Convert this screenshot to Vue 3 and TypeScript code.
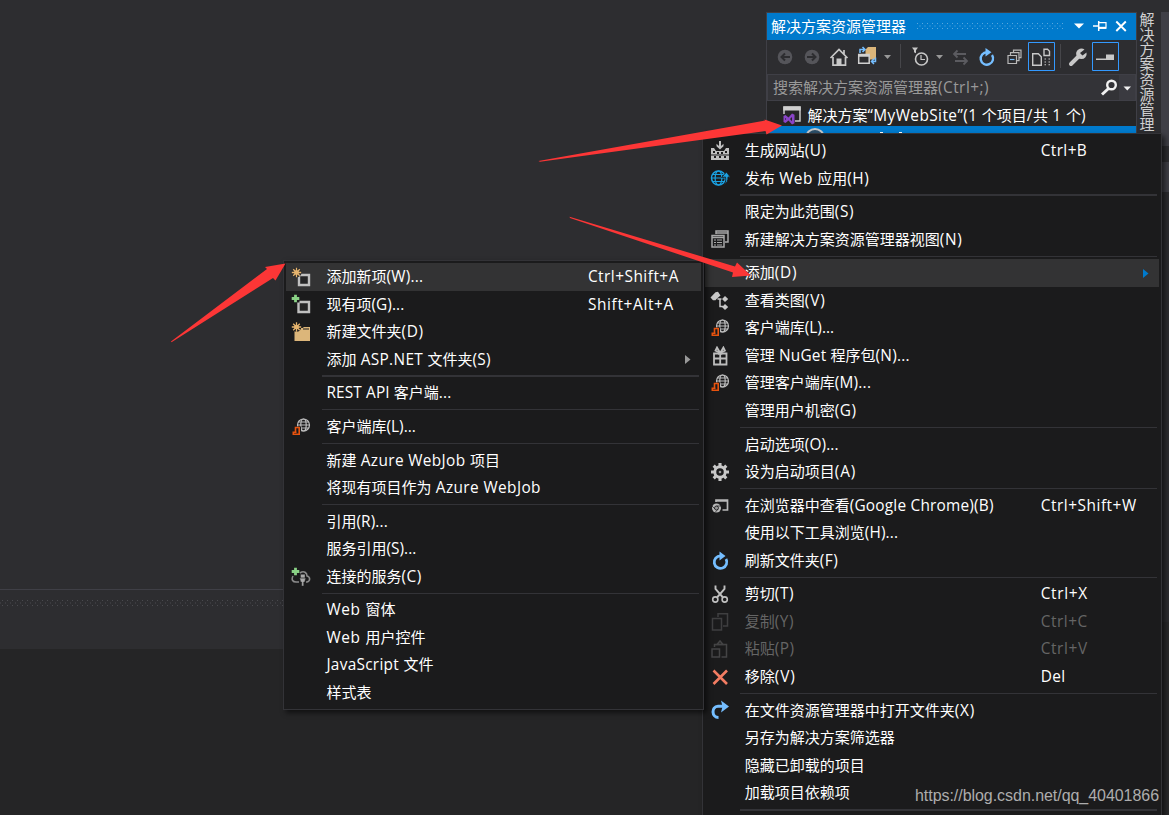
<script setup lang="ts">
import { ref, type Directive } from 'vue'

interface MenuEntry {
  label?: string
  width?: number
  icon?: string
  keys?: string
  keysWidth?: number
  disabled?: boolean
  active?: boolean
  submenu?: boolean
  separator?: boolean
  thick?: boolean
}

const sep: MenuEntry = { separator: true }
const thickSep: MenuEntry = { separator: true, thick: true }

const contextMenu = ref<MenuEntry[]>([
  { label: '生成网站(U)', width: 82, icon: 'build', keys: 'Ctrl+B', keysWidth: 46.5 },
  { label: '发布 Web 应用(H)', width: 124.5, icon: 'publish' },
  thickSep,
  { label: '限定为此范围(S)', width: 109.5 },
  { label: '新建解决方案资源管理器视图(N)', width: 218, icon: 'views' },
  sep,
  { label: '添加(D)', width: 52.5, active: true, submenu: true },
  { label: '查看类图(V)', width: 81, icon: 'diagram' },
  { label: '客户端库(L)...', width: 89.5, icon: 'library' },
  { label: '管理 NuGet 程序包(N)...', width: 165, icon: 'gift' },
  { label: '管理客户端库(M)...', width: 126.5, icon: 'library' },
  { label: '管理用户机密(G)', width: 112 },
  sep,
  { label: '启动选项(O)...', width: 94 },
  { label: '设为启动项目(A)', width: 111.5, icon: 'gear' },
  sep,
  { label: '在浏览器中查看(Google Chrome)(B)', width: 249, icon: 'browser', keys: 'Ctrl+Shift+W', keysWidth: 96 },
  { label: '使用以下工具浏览(H)...', width: 153.5 },
  { label: '刷新文件夹(F)', width: 93.5, icon: 'refresh' },
  sep,
  { label: '剪切(T)', width: 49.5, icon: 'cut', keys: 'Ctrl+X', keysWidth: 47 },
  { label: '复制(Y)', width: 49.5, icon: 'copy', keys: 'Ctrl+C', keysWidth: 47, disabled: true },
  { label: '粘贴(P)', width: 50, icon: 'paste', keys: 'Ctrl+V', keysWidth: 47, disabled: true },
  { label: '移除(V)', width: 51, icon: 'remove', keys: 'Del', keysWidth: 25 },
  sep,
  { label: '在文件资源管理器中打开文件夹(X)', width: 230.5, icon: 'open' },
  { label: '另存为解决方案筛选器' },
  { label: '隐藏已卸载的项目' },
  { label: '加载项目依赖项' },
  thickSep,
])

const addMenu = ref<MenuEntry[]>([
  { label: '添加新项(W)...', width: 97, icon: 'newitem', keys: 'Ctrl+Shift+A', keysWidth: 91, active: true },
  { label: '现有项(G)...', width: 78, icon: 'existing', keys: 'Shift+Alt+A', keysWidth: 86 },
  { label: '新建文件夹(D)', width: 97.5, icon: 'newfolder' },
  { label: '添加 ASP.NET 文件夹(S)', width: 164.5, submenu: true },
  thickSep,
  { label: 'REST API 客户端...', width: 125 },
  sep,
  { label: '客户端库(L)...', width: 89.5, icon: 'library' },
  sep,
  { label: '新建 Azure WebJob 项目', width: 173.5 },
  { label: '将现有项目作为 Azure WebJob', width: 214.5 },
  sep,
  { label: '引用(R)...', width: 61.5 },
  { label: '服务引用(S)...', width: 90 },
  { label: '连接的服务(C)', width: 95.5, icon: 'service' },
  sep,
  { label: 'Web 窗体', width: 69 },
  { label: 'Web 用户控件', width: 99 },
  { label: 'JavaScript 文件', width: 107 },
  { label: '样式表' },
])

const menus = [
  { name: 'context', items: contextMenu },
  { name: 'add', items: addMenu },
]

/** Splits a label into Latin and CJK runs. */
function runs(text: string): { text: string; latin: boolean }[] {
  return (text.match(/[\u4e00-\u9fff]+|[^\u4e00-\u9fff]+/g) ?? []).map((t) => ({
    text: t,
    latin: !/[\u4e00-\u9fff]/.test(t),
  }))
}

/** Distributes spacing over the Latin runs so that the label has the given width. */
const vFit: Directive<HTMLElement, number | undefined> = {
  mounted(el, { value }) {
    if (!value) return
    const latin = Array.from(el.querySelectorAll<HTMLElement>('.latin'))
    const count = latin.reduce((n, s) => n + (s.textContent ?? '').length, 0)
    if (!count) return
    const gap = (value - el.getBoundingClientRect().width) / count
    latin.forEach((s) => (s.style.letterSpacing = gap.toFixed(3) + 'px'))
  },
}

const icons: Record<string, string> = {
  build: `<g fill="#c0c0c0"><path d="M9 0h2v5l2.500-2.300v2.600L10 8.500 6.500 5.300V2.700L9 5z"/><path d="M1 7h3l2 3h8l2-3h3v6.500H1z"/><path d="M1 14.500h18V19H1z"/></g><g fill="#1b1b1c"><path d="M3 10h2v2H3zM7 11h2v2H7zM11 11h2v2h-2zM15 10h2v2h-2zM4 15h2v2H4zM9 15h2v2H9zM14 15h2v2h-2z"/></g>`,
  publish: `<g fill="none" stroke="#1ba1e2" stroke-width="1.200"><circle cx="8.500" cy="10" r="7" stroke-width="1.500"/><ellipse cx="8.500" cy="10" rx="3.400" ry="7"/><path d="M1.500 10h14M2.500 6.500h12M2.500 13.500h12"/></g><path d="M11.500 9.500l5-5.500L20.500 9.500l-2.500-.6c0 4-1 6-4 7.600 2-2.500 2-4.500 1.500-7.500z" fill="#1ba1e2" stroke="#1b1b1c" stroke-width=".8"/>`,
  views: `<g fill="none" stroke="#a8a8a8" stroke-width="1.500"><path d="M6 5V2h12v11h-3M6 4h12"/><path d="M2 6.500h12v11.500H2zM2 8.500h12"/><path d="M4 11h2M7 11h5M4 13.500h2M7 13.500h5M4 16h2M7 16h5" stroke-width="1.100"/></g>`,
  diagram: `<g fill="#c8c8c8"><path d="M.5 6.500L5.500 1.300 8 .8 10.500 4.500 6.500 8 5.500 9.200 3 9.200z"/><path d="M15 5l3.200 3-3.200 3-3-3zM15 13l3.200 3-3.200 3-3-3z"/></g><path d="M7.500 8h4M10 8v7.500h3" fill="none" stroke="#c8c8c8" stroke-width="1.500"/>`,
  library: `<g fill="none" stroke="#bdbdbd" stroke-width="1.200"><circle cx="12.500" cy="8" r="6"/><ellipse cx="12.500" cy="8" rx="2.700" ry="6"/><path d="M6.500 8h12M7.500 5h10M7.500 11h10"/></g><path d="M3.500 9.500H10V19H1v-5h2.500z" fill="#1b1b1c"/><path d="M4.500 14.500v-4h3.700v6.700H2.300v-2h3.200" fill="none" stroke="#e8530e" stroke-width="1.600"/>`,
  gift: `<g fill="none" stroke="#bdbdbd" stroke-width="1.800"><path d="M4 7.500h12.500v11H4zM4 12.500h12.500M10.200 7v11"/><path d="M10.200 7L5.500 4.500l1.500-3zM10.200 7l4.700-2.500-1.500-3z"/></g>`,
  gear: `<g fill="none" stroke="#c8c8c8"><circle cx="10" cy="10" r="5.200" stroke-width="2.900"/><path d="M10 1v3M10 16v3M1 10h3M16 10h3M3.700 3.700l2.100 2.100M14.200 14.200l2.100 2.100M16.300 3.700l-2.100 2.100M5.800 14.200l-2.100 2.100" stroke-width="3.100"/></g><circle cx="10" cy="10" r="1.300" fill="#999"/>`,
  browser: `<path d="M6 6V4h11.500v10h-5M5.500 5h12" fill="none" stroke="#b8b8b8" stroke-width="1.700"/><circle cx="6.500" cy="12" r="4.500" fill="#b8b8b8"/><circle cx="6.500" cy="12" r="2" fill="#999" stroke="#1b1b1c" stroke-width=".8"/><path d="M6.500 10H11M5 13l-3-3M8 13l-2.500 3" stroke="#1b1b1c" stroke-width=".7"/>`,
  refresh: `<path d="M10.500 4.800A6.300 6.300 0 1 0 16 8" fill="none" stroke="#75beff" stroke-width="2.800"/><path d="M9.500 .5l6 4.500-6 4.500z" fill="#75beff"/>`,
  cut: `<g fill="none" stroke="#c0c0c0" stroke-width="1.600"><circle cx="5.300" cy="15.500" r="2.600"/><circle cx="14.700" cy="15.500" r="2.600"/><path d="M5.500 1.500v3.500l7.500 8.500M14.500 1.500v3.500L7 13.500" stroke-width="1.900"/></g>`,
  copy: `<g fill="none" stroke="#3f3f40" stroke-width="1.500"><path d="M8 5V1.800h9.500V14H13"/><path d="M2.500 6.500h9v11.500h-9z"/></g>`,
  paste: `<g fill="none" stroke="#444445" stroke-width="1.500"><path d="M4.500 8V5.500H16.500v12.500h-5"/><path d="M2 10h7.500v8H2zM7 5.500l3-3.500L13 5.500z"/></g>`,
  remove: `<path d="M3.500 3.500l13.500 13.500M17 3.500L3.500 17" stroke="#f37c62" stroke-width="2.600" fill="none"/>`,
  open: `<path d="M8.500 17.500C1.500 17.500 1 6.500 8 6.300h6" fill="none" stroke="#75beff" stroke-width="3"/><path d="M11 .5l8 6-8 6 1.500-6z" fill="#75beff"/>`,
  newitem: `<path d="M8 8h10v10H8z" fill="#252526" stroke="#c0c0c0" stroke-width="2.400"/><circle cx="5.500" cy="5.500" r="5" fill="#2a2a2b"/><path d="M5.500.8v9.400M.8 5.500h9.400M2.200 2.200l6.600 6.600M8.800 2.200L2.200 8.800" stroke="#e5b46e" stroke-width="1.300"/><circle cx="5.500" cy="5.500" r="2.300" fill="#e5b46e"/>`,
  existing: `<path d="M7.500 8H18v10H7.500z" fill="#252526" stroke="#c0c0c0" stroke-width="2.400"/><path d="M0 0h8.500v8.500H0z" fill="#1b1b1c"/><path d="M4.500.7v7.600M.7 4.500h7.600" stroke="#89d185" stroke-width="2.800"/>`,
  newfolder: `<path d="M3.500 6h8l1.500-1h6v14H3.500z" fill="#dcb67a"/><path d="M12 7h6" stroke="#1b1b1c"/><circle cx="5.500" cy="5" r="4.800" fill="#1b1b1c"/><path d="M5.500.3v9.400M.8 5h9.400M2.200 1.700l6.600 6.600M8.800 1.700L2.200 8.300" stroke="#e5b46e" stroke-width="1.300"/><circle cx="5.500" cy="5" r="2.300" fill="#e5b46e"/>`,
  service: `<path d="M2 9c-2 4 0 6 3 6h3M9 6c4-3 7 0 7 3 3.500 1 3.500 5 0 6h-1" fill="none" stroke="#8a8a8a" stroke-width="1.600"/><path d="M9.500 7.500v3.500h4.500V7.500M8.700 11h6l-1 4h-1v4h-2v-4h-1z" fill="#aaa" stroke="#1b1b1c" stroke-width=".4"/><path d="M4.500.7v7.600M.7 4.500h7.600" stroke="#89d185" stroke-width="2.800"/>`,
}
</script>

<template>
  <div class="desktop">
    <div class="output">
      <svg class="grip" width="284" height="7">
        <defs>
          <pattern id="grip-dark" width="5" height="5" patternUnits="userSpaceOnUse">
            <path d="M2 0h1v1H2zM0 2.500h1v1H0z" fill="#4a4a4e" />
          </pattern>
        </defs>
        <rect width="284" height="6" fill="url(#grip-dark)" />
      </svg>
    </div>
    <div class="bottom"></div>

    <div class="rail"><div class="thumb"></div></div>
    <div class="side-tab">解决方案资源管理</div>

    <section class="panel">
      <header class="titlebar">
        <span class="title">解决方案资源管理器</span>
        <svg class="dots" width="150" height="7">
          <defs>
            <pattern id="grip-blue" width="5" height="5" patternUnits="userSpaceOnUse">
              <path d="M1 0h1v1H1zM3.500 2.500h1v1h-1z" fill="#59a8de" />
            </pattern>
          </defs>
          <rect width="147" height="6" fill="url(#grip-blue)" />
        </svg>
        <svg class="caption" width="60" height="16" viewBox="0 0 60 16">
          <path d="M1 5.500h10L6 10.500z" fill="#fff" />
          <g fill="none" stroke="#fff">
            <path d="M20 8h5" stroke-width="1.500" />
            <path d="M25.700 3v10" stroke-width="1.500" />
            <path d="M26 4.700h7v5.500h-7" stroke-width="1.200" />
            <path d="M26 9.800h7" stroke-width="2" />
            <path d="M43.300 3.500l9.500 9.500M52.800 3.500L43.300 13" stroke-width="1.900" />
          </g>
        </svg>
      </header>

      <div class="toolbar">
        <svg width="369" height="34" viewBox="767 40 369 34">
          <g fill="#55555a">
            <circle cx="785" cy="57" r="7.300" />
            <circle cx="812" cy="57" r="7.300" />
          </g>
          <g fill="none" stroke="#2d2d30" stroke-width="2">
            <path d="M790 57h-8M785 53.500L781.500 57l3.500 3.500M807 57h8M812 53.500l3.500 3.500-3.500 3.500" />
          </g>
          <path d="M830.500 58l8.500-8.500 8.500 8.500M833 57v8.200h12.500V57M844 50v5" fill="none" stroke="#c8c8c8" stroke-width="1.700" />
          <path d="M836.500 58.500h5V65h-5z" fill="#c8c8c8" />
          <path d="M865.500 49.500l2.500-2.500h8v12.500h-6v-5h-4.500z" fill="#dcb67a" />
          <path d="M858.700 54.500h10.500v8.800h-10.500zM858 56h12" fill="#2d2d30" stroke="#d0d0d0" stroke-width="1.500" />
          <path d="M860 53v-3.500h4M862.500 47l2.500 2.500-2.500 2.500M875.500 57.500v4h-3.500M874 58.700l-2.500 2.800 2.500 2.500" fill="none" stroke="#75beff" stroke-width="1.500" />
          <path d="M884 55h7l-3.500 4zM936 55h7l-3.500 4z" fill="#999" />
          <path d="M900.500 44v24" stroke="#46464a" />
          <circle cx="921.500" cy="59" r="6" fill="none" stroke="#c8c8c8" stroke-width="1.600" />
          <path d="M921 55v4.500h4" fill="none" stroke="#c8c8c8" stroke-width="1.200" />
          <path d="M912 47.500h6l-2 2.800v3l-2-1v-2z" fill="#c8c8c8" />
          <path d="M954 54h12M957.500 50.500L954 54l3.500 3.500M967 61h-12M963.500 57.500L967 61l-3.500 3.500" fill="none" stroke="#5b5b60" stroke-width="1.800" />
          <path d="M987 52.300a6.200 6.200 0 1 0 5 2.700" fill="none" stroke="#75beff" stroke-width="2.400" />
          <path d="M985.500 48l6 4.300-6 4.300z" fill="#75beff" />
          <g fill="none" stroke="#b8b8b8" stroke-width="1.200">
            <path d="M1008 55.500h8.500v8H1008zM1010.500 55v-2.300h8.500v8h-2.500M1013.500 52.500v-2.300h7.500v7.500h-2" />
            <path d="M1010 59.500h4.500" stroke="#75beff" />
          </g>
          <g fill="none" stroke="#3399ff">
            <path d="M1028.500 42.500h26v28h-26zM1092.500 42.500h26v28h-26z" />
          </g>
          <g fill="none" stroke="#c8c8c8" stroke-width="1.400">
            <path d="M1032.700 53.700h5.600l3 3v8.600h-8.600zM1044 49.200h3.500l2 2v4.300h-5.500z" />
            <path d="M1044.500 59h1.500M1048.500 59h1.500M1044.500 62h1.500M1048.500 62h1.500M1044.500 64.800h1.500M1048.500 64.800h1.500" stroke-width="1.100" />
          </g>
          <path d="M1060.500 44v24" stroke="#46464a" />
          <path d="M1071 64l7.500-7.500" stroke="#c8c8c8" stroke-width="4" stroke-linecap="round" />
          <path d="M1084.500 49.500a5.300 5.300 0 1 0 2 3l-4 3-2.500-2.500z" fill="#c8c8c8" />
          <path d="M1096 58.500h10v-4h8v5.500h-18z" fill="#c8c8c8" />
        </svg>
      </div>

      <div class="search">
        <span v-fit="216" class="search-text"><span v-for="(r, i) in runs('搜索解决方案资源管理器(Ctrl+;)')" :key="i" :class="{ latin: r.latin }">{{ r.text }}</span></span>
        <svg class="search-icon" width="36" height="26" viewBox="0 0 36 26">
          <path d="M20 0h16v26H20z" fill="#3f3f46" opacity=".6" />
          <circle cx="12.500" cy="10" r="4.300" fill="none" stroke="#f1f1f1" stroke-width="2.400" />
          <path d="M9.500 13.500L3 19.500" stroke="#f1f1f1" stroke-width="3" />
          <path d="M24.500 11.500h7.500l-3.700 4z" fill="#f1f1f1" />
        </svg>
      </div>

      <div class="tree">
        <div class="solution">
          <svg width="20" height="20" viewBox="0 0 20 20">
            <path d="M2 9V2h16v14h-5" fill="none" stroke="#c8c8c8" stroke-width="1.500" />
            <path d="M1.300 1.500h17.400v4H1.300z" fill="#d0d0d0" />
            <path d="M1.500 11l2-1 3 2.500L10 8.500l2.500 1.200v8.600L10 19.500l-3.500-4-3 2.500-2-1zM10 12l-2 2 2 2.200zM3 13v2l1.200-1z" fill="#8a44c8" fill-rule="evenodd" />
          </svg>
          <span v-fit="278.5"><span v-for="(r, i) in runs('解决方案“MyWebSite”(1 个项目/共 1 个)')" :key="i" :class="{ latin: r.latin }">{{ r.text }}</span></span>
        </div>
        <div class="selected">
          <svg width="369" height="8" viewBox="767 126 369 8">
            <ellipse cx="815" cy="137" rx="8.500" ry="8" fill="#2d4f68" stroke="#c8c8c8" stroke-width="2" />
            <path d="M880 132h3v1h-3zM899 132h3v1h-3z" fill="#fff" />
          </svg>
        </div>
      </div>
    </section>

    <nav v-for="m in menus" :key="m.name" class="menu" :class="m.name">
      <template v-for="(item, i) in m.items.value" :key="i">
        <div v-if="item.separator" class="separator" :class="{ thick: item.thick }"></div>
        <div v-else class="item" :class="{ active: item.active, disabled: item.disabled }">
          <svg class="icon" width="20" height="20" viewBox="0 0 20 20" v-html="item.icon ? icons[item.icon] : ''"></svg>
          <span class="label"><span v-fit="item.width"><span v-for="(r, k) in runs(item.label ?? '')" :key="k" :class="{ latin: r.latin }">{{ r.text }}</span></span></span>
          <span v-if="item.keys" class="keys"><span v-fit="item.keysWidth"><span class="latin">{{ item.keys }}</span></span></span>
          <svg v-if="item.submenu" class="arrow" width="6" height="9" viewBox="0 0 6 9"><path d="M0 0l5.500 4.500L0 9z" /></svg>
        </div>
      </template>
    </nav>

    <svg class="pointers" width="1169" height="815">
      <g fill="#fc3636">
        <path d="M538.500 161L765 120.500 764.500 119.500 782 125.500 766.500 134.500 765.500 131 540 161.800z" />
        <path d="M569.500 216.800L735 266.500 737 262.500 751 275.500 732 277 733 272.500 570 218z" />
        <path d="M171 341.500L267 269 265 267 285.500 263.500 275.500 280.500 273 278 171.500 342.300z" />
      </g>
    </svg>
    <div class="watermark"><span v-fit="244"><span class="latin-mark latin">https://blog.csdn.net/qq_40401866</span></span></div>
  </div>
</template>

<style>
html, body { margin: 0; overflow: hidden; background: #2d2d30; }
</style>

<style scoped>
.desktop {
  position: relative;
  width: 1169px;
  height: 815px;
  overflow: hidden;
  background: #2d2d30;
  color: #fff;
  font-family: "Noto Sans", "Noto Sans CJK SC", sans-serif;
  font-size: 15px;
  white-space: pre;
}
.desktop span { white-space: pre; }
.latin { font-family: "Open Sans", "Noto Sans", sans-serif; font-size: 15.4px; line-height: 1; }
.output {
  position: absolute;
  left: 0;
  top: 589px;
  width: 1169px;
  height: 60px;
  box-sizing: border-box;
  border-top: 1px solid #3f3f46;
  padding-top: 10px;
}
.grip { display: block; }
.bottom { position: absolute; left: 0; top: 649px; width: 1169px; height: 166px; background: #252526; }
.rail { position: absolute; left: 1161px; top: 12px; width: 8px; height: 803px; background: linear-gradient(#3f3f46 134px, #2d2d30 134px, #2d2d30 610px, #29292b 610px); }
.thumb { height: 30px; background: #3f3f46; transform: translateY(150px); }
.side-tab {
  position: absolute;
  left: 1138.5px;
  top: 11.5px;
  height: 122px;
  width: 16px;
  line-height: 16px;
  writing-mode: vertical-rl;
  font-family: "Noto Sans CJK SC", sans-serif;
  font-size: 15px;
  color: #d0d0d0;
}
.panel { position: absolute; left: 766px; top: 12px; width: 371px; height: 122px; box-sizing: border-box; border: 1px solid #3f3f46; border-bottom: 0; overflow: hidden; }
.titlebar { display: flex; align-items: center; height: 27px; background: #007acc; }
.title { margin-left: 4px; flex: 0 0 145px; line-height: 26px; padding-bottom: 2px; }
.dots { margin-bottom: 1px; }
.caption { margin-left: 7px; margin-bottom: 2px; }
.toolbar { height: 34px; background: #2d2d30; }
.toolbar svg { display: block; }
.search { display: flex; align-items: center; height: 27px; box-sizing: border-box; border: 1px solid #3f3f46; background: #333337; color: #999; }
.search-text { margin-left: 5px; line-height: 25px; }
.search-icon { margin-left: auto; }
.tree { background: #252526; padding-top: 3px; height: 32px; box-sizing: border-box; }
.solution { display: flex; align-items: center; height: 22px; gap: 6px; padding-left: 14.5px; line-height: 22px; }
.selected { height: 8px; background: #007acc; }
.selected svg { display: block; }

.menu { position: absolute; box-sizing: border-box; background: #1b1b1c; border: 1px solid #333337; box-shadow: 3px 3px 5px rgba(0, 0, 0, .55); }
.context { left: 701.5px; top: 133px; width: 460px; height: 690px; padding: 3px 2px; }
.add { left: 283.4px; top: 260px; width: 421px; height: 450px; padding: 2px; }
.item { display: flex; align-items: center; height: 27.5px; line-height: 27.5px; }
.item.active { background: #333334; }
.item.disabled { color: #656565; }
.icon { flex: none; }
.context .icon { margin-left: 5.2px; }
.add .icon { margin-left: 5px; }
.context .label { margin-left: 15px; flex: 0 0 296px; }
.add .label { margin-left: 15px; flex: 0 0 261.5px; }
.arrow { margin-left: auto; margin-right: 10px; fill: #999; }
.active .arrow { fill: #007acc; }
.separator { box-sizing: border-box; height: 6.2px; margin-left: 35.5px; margin-right: 2px; padding-top: 2.4px; }
.separator::before { content: ""; display: block; height: 1px; background: #333337; }
.separator.thick::before { height: 2px; }
.pointers { position: absolute; left: 0; top: 0; }
.watermark { position: absolute; left: 915px; top: 784px; line-height: 22px; color: #adadad; }
.latin-mark { font-family: "Liberation Sans", Arial, sans-serif; font-size: 16px; }
</style>
